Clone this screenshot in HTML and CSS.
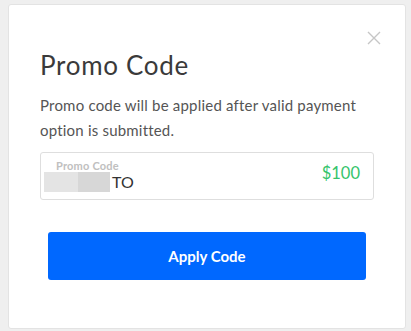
FILE: index.html
```html
<!DOCTYPE html>
<html>
<head>
<meta charset="utf-8">
<link rel="stylesheet" href="styles.css">
</head>
<body>
<div class="card">
  <button class="close" aria-label="Close">
    <svg width="14" height="14" viewBox="0 0 14 14"><path d="M1 1L13 13M13 1L1 13" stroke="#c6c6c6" stroke-width="1.4" fill="none"/></svg>
  </button>
  <h1 class="title">Promo Code</h1>
  <p class="desc">Promo code will be applied after valid payment option is submitted.</p>
  <div class="field">
    <div class="field-main">
      <div class="label">Promo Code</div>
      <div class="value"><span class="mask"><span class="mask-a"></span><span class="mask-b"></span></span>TO</div>
    </div>
    <div class="amount">$100</div>
  </div>
  <button class="apply">Apply Code</button>
</div>
</body>
</html>
```
FILE: styles.css
```css
* { box-sizing: border-box; }
html, body { margin: 0; padding: 0; }
body {
  background: #efefef;
  font-family: Lato, "Open Sans", sans-serif;
  width: 411px;
  height: 331px;
  overflow: hidden;
}
.card {
  position: relative;
  margin: 4px 0 0 8px;
  width: 398px;
  height: 325px;
  background: #fff;
  border: 1px solid #e3e3e3;
  border-radius: 3px;
  padding: 45px 31px 0 31px;
}
.close {
  position: absolute;
  top: 26px;
  right: 24px;
  padding: 0;
  border: 0;
  background: none;
  width: 14px;
  height: 14px;
}
.close svg { display: block; }
.title {
  margin: 0;
  font-weight: 400;
  font-size: 26px;
  line-height: 30px;
  letter-spacing: 0.7px;
  color: #3a3a3a;
}
.desc {
  margin: 13px 0 0 0;
  font-size: 15px;
  line-height: 25px;
  letter-spacing: 0.2px;
  color: #555;
}
.field {
  margin-top: 9px;
  height: 48px;
  border: 1px solid #dedede;
  border-radius: 3px;
  display: flex;
  align-items: center;
  padding: 0 13px 0 3px;
}
.field-main { flex: 1; }
.label {
  font-size: 11px;
  font-weight: 700;
  color: #c0c0c0;
  line-height: 12px;
  padding-left: 12px;
  margin-top: 0;
  letter-spacing: 0.2px;
}
.value {
  display: flex;
  align-items: center;
  font-size: 16px;
  color: #333;
  line-height: 20px;
}
.mask { display: flex; height: 20px; margin-right: 2px; }
.mask-a { width: 34px; background: #e4e4e4; }
.mask-b { width: 32px; background: #d7d7d7; }
.amount {
  font-size: 16.5px;
  color: #35c46c;
  margin-top: -6px;
}
.apply {
  display: block;
  margin: 32px 0 0 8px;
  width: 318px;
  height: 48px;
  border: 0;
  border-radius: 3px;
  background: #0068ff;
  color: #fff;
  font-family: Lato, "Open Sans", sans-serif;
  font-weight: 700;
  font-size: 15px;
}
```
